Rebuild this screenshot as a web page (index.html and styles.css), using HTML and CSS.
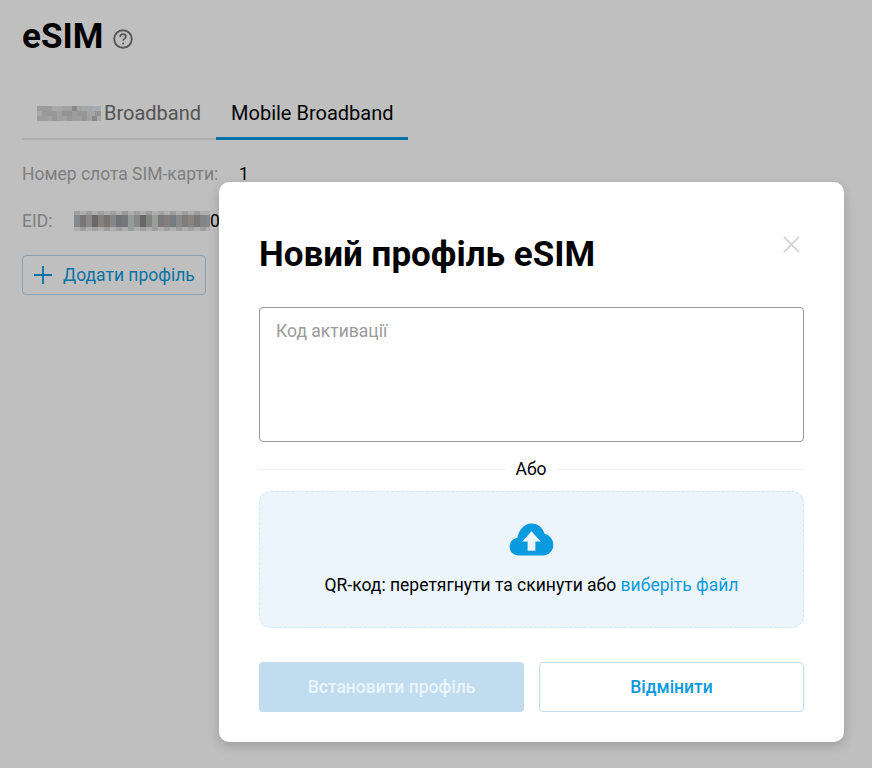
FILE: index.html
```html
<!DOCTYPE html>
<html lang="uk">
<head>
<meta charset="utf-8">
<title>eSIM</title>
<link rel="stylesheet" href="styles.css">
</head>
<body>
<main class="page">
  <header class="title-row">
    <h1 class="title">eSIM</h1>
    <svg class="help" width="20" height="20" viewBox="0 0 20 20" aria-hidden="true">
      <circle cx="10" cy="10" r="8.8" fill="none" stroke="#757575" stroke-width="1.9"/>
      <path d="M7.200 8c0-1.700 1.300-2.800 2.900-2.800s2.800 1.100 2.800 2.400c0 2.100-2.800 2-2.800 4.200" fill="none" stroke="#757575" stroke-width="1.800"/>
      <circle cx="10.100" cy="14.500" r="1.100" fill="#757575"/>
    </svg>
  </header>
  <nav class="tabs">
    <div class="tab">
      <svg class="mosaic" width="64" height="15" viewBox="0 0 64 15" aria-hidden="true">
        <rect width="64" height="15" fill="#b0b0b0"/>
        <g shape-rendering="crispEdges">
          <rect x="0" y="0" width="10" height="5" fill="#a2a2a2"/>
          <rect x="10" y="0" width="5" height="5" fill="#a4a4a4"/>
          <rect x="15" y="0" width="5" height="5" fill="#aeb0b0"/>
          <rect x="25" y="0" width="10" height="5" fill="#a8a8a8"/>
          <rect x="35" y="0" width="5" height="5" fill="#8f8f8f"/>
          <rect x="40" y="0" width="5" height="5" fill="#aaa"/>
          <rect x="50" y="0" width="5" height="5" fill="#adb0b0"/>
          <rect x="55" y="0" width="9" height="5" fill="#aeb4b8"/>
          <rect x="5" y="5" width="5" height="5" fill="#a0a0a0"/>
          <rect x="10" y="5" width="10" height="5" fill="#9e9e9e"/>
          <rect x="20" y="5" width="5" height="5" fill="#a8a8a8"/>
          <rect x="25" y="5" width="10" height="5" fill="#989898"/>
          <rect x="35" y="5" width="5" height="5" fill="#a4a4a4"/>
          <rect x="40" y="5" width="10" height="5" fill="#9c9c9c"/>
          <rect x="50" y="5" width="8" height="5" fill="#ababab"/>
          <rect x="58" y="5" width="6" height="5" fill="#999"/>
          <rect x="0" y="10" width="10" height="5" fill="#a3a3a3"/>
          <rect x="10" y="10" width="5" height="5" fill="#a9a9a9"/>
          <rect x="15" y="10" width="5" height="5" fill="#9c9c9c"/>
          <rect x="20" y="10" width="10" height="5" fill="#a6a6a6"/>
          <rect x="30" y="10" width="5" height="5" fill="#9d9d9d"/>
          <rect x="35" y="10" width="10" height="5" fill="#a5a5a5"/>
          <rect x="45" y="10" width="5" height="5" fill="#9a9a9a"/>
          <rect x="50" y="10" width="5" height="5" fill="#a8a8a8"/>
          <rect x="55" y="10" width="5" height="5" fill="#8f8f93"/>
        </g>
      </svg>
      <span>Broadband</span>
    </div>
    <div class="tab tab-active">Mobile Broadband</div>
  </nav>
  <dl class="info">
    <div class="info-row">
      <dt class="slot-label">Номер слота SIM-карти:</dt>
      <dd class="value">1</dd>
    </div>
    <div class="info-row">
      <dt class="eid-label">EID:</dt>
      <dd class="value eid-value">
        <svg class="mosaic" width="136" height="20" viewBox="0 0 136 20" aria-hidden="true">
          <rect width="136" height="20" fill="#b6b6b6"/>
          <g shape-rendering="crispEdges">
            <rect x="0" y="0" width="6" height="4" fill="#a7a7a7"/>
            <rect x="12" y="0" width="6" height="4" fill="#a3a3a3"/>
            <rect x="24" y="0" width="6" height="4" fill="#a5a5a5"/>
            <rect x="36" y="0" width="6" height="4" fill="#a8a8a8"/>
            <rect x="48" y="0" width="6" height="4" fill="#a2a2a2"/>
            <rect x="60" y="0" width="6" height="4" fill="#a7a7a7"/>
            <rect x="72" y="0" width="6" height="4" fill="#a3a3a3"/>
            <rect x="84" y="0" width="6" height="4" fill="#a8a8a8"/>
            <rect x="96" y="0" width="6" height="4" fill="#a4a4a4"/>
            <rect x="108" y="0" width="6" height="4" fill="#a6a6a6"/>
            <rect x="120" y="0" width="6" height="4" fill="#a3a3a3"/>
            <rect x="0" y="4" width="6" height="12" fill="#8c8f92"/>
            <rect x="6" y="4" width="6" height="12" fill="#7c7a7a"/>
            <rect x="12" y="4" width="6" height="12" fill="#8f8f8f"/>
            <rect x="18" y="4" width="6" height="12" fill="#706e6c"/>
            <rect x="24" y="4" width="6" height="12" fill="#8a8680"/>
            <rect x="30" y="4" width="6" height="12" fill="#7d7a78"/>
            <rect x="36" y="4" width="6" height="12" fill="#8d8c8c"/>
            <rect x="42" y="4" width="6" height="12" fill="#75777a"/>
            <rect x="48" y="4" width="6" height="12" fill="#7a7c80"/>
            <rect x="54" y="4" width="6" height="12" fill="#9aa3a0"/>
            <rect x="60" y="4" width="6" height="12" fill="#8b8f90"/>
            <rect x="66" y="4" width="6" height="12" fill="#6e6c6c"/>
            <rect x="72" y="4" width="6" height="12" fill="#8a8c8a"/>
            <rect x="78" y="4" width="6" height="12" fill="#9fa5a0"/>
            <rect x="84" y="4" width="6" height="12" fill="#7c8085"/>
            <rect x="90" y="4" width="6" height="12" fill="#8d8480"/>
            <rect x="96" y="4" width="6" height="12" fill="#7a8088"/>
            <rect x="102" y="4" width="6" height="12" fill="#8f8f92"/>
            <rect x="108" y="4" width="6" height="12" fill="#85817e"/>
            <rect x="114" y="4" width="6" height="12" fill="#8f8a88"/>
            <rect x="120" y="4" width="6" height="12" fill="#7d7d7d"/>
            <rect x="126" y="4" width="6" height="12" fill="#8a8a8a"/>
            <rect x="132" y="4" width="4" height="12" fill="#8a9095"/>
            <rect x="6" y="16" width="6" height="4" fill="#a5a5a5"/>
            <rect x="18" y="16" width="6" height="4" fill="#a8a8a8"/>
            <rect x="30" y="16" width="6" height="4" fill="#a4a4a4"/>
            <rect x="42" y="16" width="6" height="4" fill="#a7a7a7"/>
            <rect x="54" y="16" width="6" height="4" fill="#a3a3a3"/>
            <rect x="66" y="16" width="6" height="4" fill="#a8a8a8"/>
            <rect x="78" y="16" width="6" height="4" fill="#a5a5a5"/>
            <rect x="90" y="16" width="6" height="4" fill="#a7a7a7"/>
            <rect x="102" y="16" width="6" height="4" fill="#a4a4a4"/>
            <rect x="114" y="16" width="6" height="4" fill="#a8a8a8"/>
            <rect x="126" y="16" width="6" height="4" fill="#a5a5a5"/>
          </g>
        </svg><span>0</span>
      </dd>
    </div>
  </dl>
  <button class="add-btn" type="button">
    <svg width="20" height="20" viewBox="0 0 20 20" aria-hidden="true">
      <path d="M10 1v18M1 10h18" stroke="#0a9ae0" stroke-width="1.800" fill="none"/>
    </svg>
    <span>Додати профіль</span>
  </button>
</main>
<div class="overlay"></div>
<section class="modal">
  <header class="modal-head">
    <h2 class="modal-title">Новий профіль eSIM</h2>
    <svg class="close" width="17" height="17" viewBox="0 0 18 18" aria-hidden="true">
      <path d="M1 1l16 16M17 1L1 17" stroke="#d4d4d4" stroke-width="2" fill="none"/>
    </svg>
  </header>
  <div class="code-input">Код активації</div>
  <div class="divider"><span>Або</span></div>
  <div class="drop">
    <svg class="cloud" width="45" height="33" viewBox="0 0 46 34" aria-hidden="true">
      <path d="M10 33.500C4.500 33.500.5 29.500.5 24.500c0-4.700 3.400-8.400 7.800-9C10 7 15.700.500 23 .500c6.500 0 11.600 4.300 13.700 10.800C41.500 12.300 45.500 16.800 45.500 22.500c0 6.200-4.500 11-10.500 11z" fill="#0a9ae0"/>
      <path d="M23 8.500l9.500 10.500h-5.500v9.500h-8V19h-5.500z" fill="#ebf5fb"/>
    </svg>
    <p class="drop-text">QR-код: перетягнути та скинути або <a class="link">виберіть файл</a></p>
  </div>
  <footer class="actions">
    <button class="btn btn-primary" type="button" disabled>Встановити профіль</button>
    <button class="btn btn-ghost" type="button">Відмінити</button>
  </footer>
</section>
</body>
</html>
```

FILE: styles.css
```css
* { box-sizing: border-box; }
html, body { margin: 0; height: 100%; }
body {
  font-family: Roboto, "Noto Sans", sans-serif;
  background: #fff;
  color: #000;
  overflow: hidden;
}
.page { padding: 14px 22px 0; }
.title-row { display: flex; align-items: center; gap: 10px; height: 46px; }
.title { margin: 0; font-size: 35px; line-height: 46px; font-weight: 700; }
.help { margin-top: 3px; }
.tabs { display: flex; align-items: flex-end; margin-top: 28px; width: 386px; }
.tab {
  display: flex;
  align-items: center;
  gap: 3px;
  height: 52px;
  padding: 0 15px;
  font-size: 20px;
  white-space: nowrap;
  color: #717171;
  border-bottom: 2px solid #ebebeb;
}
.tab-active { color: #000; border-bottom: 3px solid #0a9ae0; }
.mosaic { display: block; flex: none; filter: brightness(1.28); }
.info { margin: 10px 0 0; }
.info-row { display: flex; align-items: center; height: 47px; font-size: 17.5px; }
.slot-label { color: #aaa; width: 217px; }
.eid-label { color: #aaa; width: 52px; }
.value { margin: 0; color: #000; }
.eid-value { display: flex; align-items: center; }
.add-btn {
  display: flex;
  align-items: center;
  gap: 10px;
  width: 184px;
  height: 40px;
  margin-top: 11px;
  padding: 0 10px;
  background: transparent;
  border: 1px solid #b5d9f0;
  border-radius: 4px;
  font: 400 17.5px Roboto, sans-serif;
  white-space: nowrap;
  color: #0a9ae0;
}
.overlay { position: absolute; inset: 0; background: rgba(0, 0, 0, 0.25); }
.modal {
  position: absolute;
  left: 219px;
  top: 182px;
  width: 625px;
  height: 560px;
  padding: 40px;
  background: #fff;
  border-radius: 10px;
  box-shadow: 0 4px 12px rgba(0, 0, 0, 0.18);
}
.modal-head { display: flex; justify-content: space-between; height: 85px; }
.modal-title { margin: 0; font-size: 35px; line-height: 66px; font-weight: 700; }
.close { margin: 14px 4px 0 0; }
.code-input {
  height: 135px;
  padding: 12px 16px;
  border: 1px solid #999;
  border-radius: 4px;
  font-size: 17.5px;
  line-height: 22px;
  color: #9a9a9a;
}
.divider {
  display: flex;
  align-items: center;
  gap: 10px;
  height: 22px;
  margin: 16px 0 11px;
  font-size: 17.5px;
}
.divider::before, .divider::after { content: ""; flex: 1; height: 1px; background: #ebedef; }
.divider span { padding: 0 1px 1px 0; }
.drop {
  display: flex;
  flex-direction: column;
  align-items: center;
  height: 137px;
  padding-top: 31px;
  background: #ebf5fb;
  border: 1px dashed #cfe8f8;
  border-radius: 12px;
}
.drop-text { margin: 18px 0 0; font-size: 17.5px; line-height: 22px; }
.link { color: #0a9ae0; }
.actions { display: grid; grid-template-columns: 1fr 1fr; gap: 15px; margin-top: 34px; }
.btn {
  height: 50px;
  border-radius: 4px;
  font: 500 17.5px Roboto, sans-serif;
}
.btn-primary { background: #c1dcee; border: 0; color: #eaf4fb; }
.btn-ghost { background: #fff; border: 1px solid #c1dcee; color: #0a9ae0; }
```
